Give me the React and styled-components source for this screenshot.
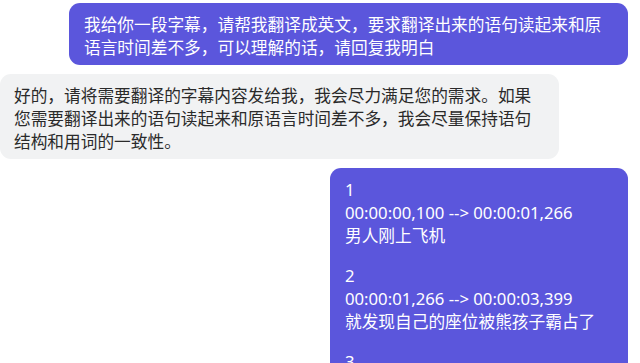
import React from "react";
import styled, { createGlobalStyle } from "styled-components";

const Global = createGlobalStyle`
  html, body { margin: 0; padding: 0; background: #ffffff; }
  body {
    font-family: "Noto Sans", "Noto Sans CJK SC", sans-serif;
    overflow: hidden;
  }
`;

const Thread = styled.div`
  display: flex;
  flex-direction: column;
  gap: 9px;
  padding: 3px 12px 0 0;
  width: 640px;
  box-sizing: border-box;
`;

const Row = styled.div`
  display: flex;
  justify-content: ${(p) => (p.$mine ? "flex-end" : "flex-start")};
`;

const Bubble = styled.div`
  box-sizing: border-box;
  max-width: 559px;
  ${(p) => (p.$width ? `width: ${p.$width}px;` : "")}
  padding: ${(p) => (p.$mine ? "10px 15px 6px 15px" : "10px 14px 6px 14px")};
  border-radius: 11px;
  background: ${(p) => (p.$mine ? "#5b56dc" : "#f1f2f3")};
  color: ${(p) => (p.$mine ? "#ffffff" : "#2a2a2a")};
  font-size: 16.7px;
  line-height: 23px;
  word-break: break-all;
`;

const Para = styled.p`
  margin: 0 0 17px 0;
  &:last-child { margin-bottom: 0; }
`;

const Line = styled.div``;

const subtitles = [
  { n: "1", t: "00:00:00,100 --> 00:00:01,266", s: "男人刚上飞机" },
  { n: "2", t: "00:00:01,266 --> 00:00:03,399", s: "就发现自己的座位被熊孩子霸占了" },
  { n: "3", t: "", s: "" },
];

export default function App() {
  return (
    <>
      <Global />
      <Thread>
        <Row $mine>
          <Bubble $mine>
            我给你一段字幕，请帮我翻译成英文，要求翻译出来的语句读起来和原语言时间差不多，可以理解的话，请回复我明白
          </Bubble>
        </Row>
        <Row>
          <Bubble>
            好的，请将需要翻译的字幕内容发给我，我会尽力满足您的需求。如果您需要翻译出来的语句读起来和原语言时间差不多，我会尽量保持语句结构和用词的一致性。
          </Bubble>
        </Row>
        <Row $mine>
          <Bubble $mine $width={298}>
            {subtitles.map((it) => (
              <Para key={it.n}>
                <Line>{it.n}</Line>
                {it.t && <Line>{it.t}</Line>}
                {it.s && <Line>{it.s}</Line>}
              </Para>
            ))}
          </Bubble>
        </Row>
      </Thread>
    </>
  );
}
